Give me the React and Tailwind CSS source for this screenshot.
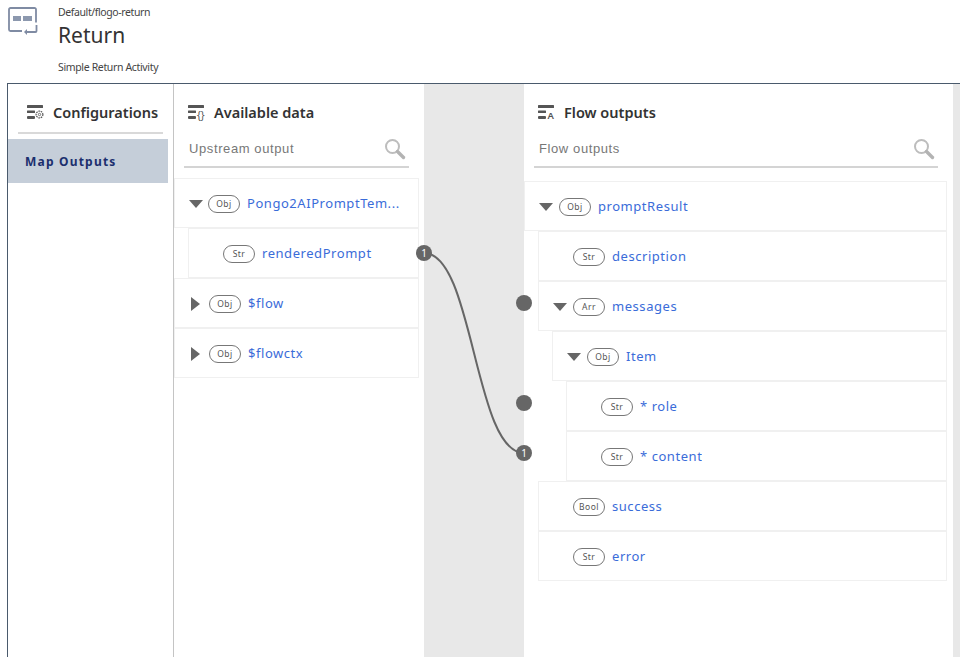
import React from "react";

const SANS = "font-['Noto_Sans','Open_Sans',sans-serif]";

/* panel title icon: three bars + a small glyph */
function PanelIcon({ glyph }) {
  return (
    <svg width="18" height="16" viewBox="0 0 18 16" className="shrink-0">
      <rect x="0" y="0" width="16" height="3" rx="0.5" fill="#555" />
      <rect x="0" y="5.5" width="8" height="2.5" rx="0.5" fill="#555" />
      <rect x="0" y="11" width="8" height="3" rx="1" fill="#555" />
      {glyph === "gear" && (
        <g fill="none" stroke="#555">
          <circle cx="12.5" cy="9.5" r="3.4" strokeWidth="1.2" strokeDasharray="1.6 0.8" />
          <circle cx="12.5" cy="9.5" r="1.2" strokeWidth="0.8" />
        </g>
      )}
      {glyph === "braces" && (
        <text x="9" y="14" fontSize="10" fontFamily="'Noto Sans',sans-serif" fill="#555">{"{}"}</text>
      )}
      {glyph === "a" && (
        <text x="9.5" y="14" fontSize="9.5" fontWeight="600" fontFamily="'Noto Sans',sans-serif" fill="#555">A</text>
      )}
    </svg>
  );
}

function SearchIcon() {
  return (
    <svg width="22" height="22" viewBox="0 0 22 22" className="shrink-0">
      <circle cx="8.5" cy="8.5" r="6.5" fill="none" stroke="#bdbdbd" strokeWidth="2" />
      <line x1="13.5" y1="13.5" x2="19.5" y2="19.5" stroke="#b3b3b3" strokeWidth="3.4" strokeLinecap="round" />
    </svg>
  );
}

function HeaderIcon() {
  return (
    <svg width="30" height="30" viewBox="0 0 30 30" className="shrink-0">
      <path d="M27 15V2a1.500 1.500 0 0 0-1.500-1.500H1.500A1.500 1.500 0 0 0 0 2v20a1.500 1.500 0 0 0 1.500 1.500H13" fill="none" stroke="#7f8ba3" strokeWidth="1.8" transform="translate(1 0.500)" />
      <rect x="5" y="9" width="8" height="5" fill="#8c98ae" />
      <rect x="15" y="9" width="9" height="5" fill="#8c98ae" />
      <path d="M28.500 18v6a1 1 0 0 1-1 1H18" fill="none" stroke="#7f8ba3" strokeWidth="1.8" />
      <path d="M19 22v6l-3-3z" fill="#7f8ba3" />
    </svg>
  );
}

function Caret({ open }) {
  if (open) {
    return (
      <svg width="14" height="8" viewBox="0 0 14 8" className="shrink-0">
        <path d="M0 0h14L7 8z" fill="#666" />
      </svg>
    );
  }
  return (
    <svg width="9" height="14" viewBox="0 0 9 14" className="shrink-0">
      <path d="M0 0l9 7-9 7z" fill="#666" />
    </svg>
  );
}

function Pill({ label }) {
  return (
    <span className="flex h-[18px] w-[32px] shrink-0 items-center justify-center rounded-full border border-[#777] text-[8.5px] leading-none tracking-[0.5px] text-[#555]">
      {label}
    </span>
  );
}

/* one tree row; the caret slot sets where the pill starts */
function Row({ caret, label, name, className, slot }) {
  return (
    <div className={`flex h-[50px] items-center border border-[#f0f0f0] pt-[2px] ${className}`}>
      <div className={`flex shrink-0 items-center ${slot || "w-[34px] pl-[14px]"}`}>
        {caret && <Caret open={caret === "open"} />}
      </div>
      <Pill label={label} />
      <span className="ml-[7px] truncate text-[13px] tracking-[0.55px] text-[#3a6cd9]">{name}</span>
    </div>
  );
}

function PanelTitle({ glyph, title, className }) {
  return (
    <div className={`flex shrink-0 items-center pt-[9px] ${className}`}>
      <PanelIcon glyph={glyph} />
      <span className="text-[14.5px] font-semibold leading-none text-[#333]">{title}</span>
    </div>
  );
}

function SearchBox({ placeholder, className }) {
  return (
    <div className={`-mt-[4px] flex h-[40px] shrink-0 items-center justify-between border-b-2 border-[#d4d4d4] pl-[5px] pr-[3px] pt-[4px] ${className}`}>
      <span className="font-['Liberation_Sans',sans-serif] text-[13px] tracking-[0.6px] text-[#777]">{placeholder}</span>
      <SearchIcon />
    </div>
  );
}

function Dot({ className, num }) {
  return (
    <span className={`absolute flex h-4 w-4 items-center justify-center rounded-full bg-[#666] text-[10px] leading-none text-white ${className}`}>
      {num}
    </span>
  );
}

export default function App() {
  return (
    <div className={`flex h-[657px] w-[960px] flex-col overflow-hidden bg-white ${SANS}`}>
      {/* Header */}
      <div className="flex h-[83px] shrink-0 pl-[8px] pt-[5px]">
        <div className="mt-[2px] w-[50px]">
          <HeaderIcon />
        </div>
        <div className="flex flex-col">
          <span className="text-[10.5px] leading-[14px] tracking-[-0.4px] text-[#444]">Default/flogo-return</span>
          <span className="mt-[1px] text-[21px] leading-[30px] text-[#333]">Return</span>
          <span className="mt-[10px] text-[10.5px] leading-[14px] tracking-[-0.35px] text-[#444]">Simple Return Activity</span>
        </div>
      </div>

      {/* Main */}
      <div className="ml-[7px] flex min-h-0 flex-1 border-l border-t border-[#4a5a6c]">
        {/* Configurations */}
        <div className="flex w-[166px] shrink-0 flex-col border-r border-[#c4c4c4]">
          <PanelTitle glyph="gear" title="Configurations" className="mx-[10px] h-[50px] gap-[8px] border-b-2 border-[#d9d9d9] pl-[9px]" />
          <div className="mr-[5px] mt-[5px] flex h-[44px] items-center bg-[#c5ced9] pl-[17px] pt-[2px] text-[12px] font-bold tracking-[1.2px] text-[#1b2f6e]">
            Map Outputs
          </div>
        </div>

        {/* Available data */}
        <div className="flex w-[250px] shrink-0 flex-col">
          <PanelTitle glyph="braces" title="Available data" className="h-[48px] gap-[8px] pl-[14px]" />
          <SearchBox placeholder="Upstream output" className="ml-[10px] mr-[15px]" />
          <div className="mr-[5px] mt-[10px]">
            <Row caret="open" label="Obj" name="Pongo2AIPromptTem..." slot="w-[33px] pl-[14px]" />
            <Row label="Str" name="renderedPrompt" className="ml-[14px]" />
            <Row caret="closed" label="Obj" name="$flow" slot="w-[34px] pl-[16px]" />
            <Row caret="closed" label="Obj" name="$flowctx" slot="w-[34px] pl-[16px]" />
          </div>
        </div>

        {/* Mapping gutter */}
        <div className="relative w-[100px] shrink-0 bg-[#e8e8e8]">
          <svg width="100" height="240" viewBox="0 0 100 240" className="absolute left-0 top-[160px] overflow-visible">
            <path d="M0 9C50 9 50 209 100 209" fill="none" stroke="#666" strokeWidth="2" />
          </svg>
          <Dot className="left-[-8px] top-[161px]" num="1" />
          <Dot className="left-[92px] top-[211px]" />
          <Dot className="left-[92px] top-[311px]" />
          <Dot className="left-[92px] top-[361px]" num="1" />
        </div>

        {/* Flow outputs */}
        <div className="flex w-[429px] shrink-0 flex-col">
          <PanelTitle glyph="a" title="Flow outputs" className="h-[48px] gap-[8px] pl-[14px]" />
          <SearchBox placeholder="Flow outputs" className="ml-[10px] mr-[15px]" />
          <div className="mr-[6px] mt-[13px]">
            <Row caret="open" label="Obj" name="promptResult" />
            <Row label="Str" name="description" className="ml-[14px]" />
            <Row caret="open" label="Arr" name="messages" className="ml-[14px]" />
            <Row caret="open" label="Obj" name="Item" className="ml-[28px]" />
            <Row label="Str" name="* role" className="ml-[42px]" />
            <Row label="Str" name="* content" className="ml-[42px]" />
            <Row label="Bool" name="success" className="ml-[14px]" />
            <Row label="Str" name="error" className="ml-[14px]" />
          </div>
        </div>

        <div className="flex-1 bg-[#e8e8e8]" />
      </div>
    </div>
  );
}
